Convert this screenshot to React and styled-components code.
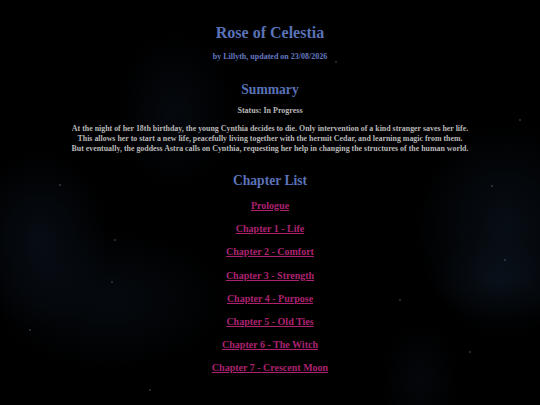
import styled, { createGlobalStyle } from "styled-components";

const GlobalStyle = createGlobalStyle`
  html, body {
    margin: 0;
    padding: 0;
    background: #000;
  }
  body {
    font-family: "Liberation Serif", "Times New Roman", serif;
  }
`;

const stars = [
  [60, 185], [115, 240], [492, 186], [336, 62], [112, 282], [470, 352],
  [30, 330], [400, 300], [150, 390], [520, 120], [505, 260],
];

const starLayer = stars
  .map(([x, y]) => `radial-gradient(circle at ${x}px ${y}px, rgba(200,215,255,0.4) 0, rgba(200,215,255,0) 1.3px)`)
  .join(",");

const Page = styled.div`
  min-height: 405px;
  box-sizing: border-box;
  padding: 23px 0 20px;
  text-align: center;
  background:
    ${starLayer},
    radial-gradient(ellipse 70px 90px at 40px 240px, rgba(20, 36, 58, 0.35), rgba(0,0,0,0)),
    radial-gradient(ellipse 120px 70px at 110px 300px, rgba(18, 32, 50, 0.3), rgba(0,0,0,0)),
    radial-gradient(ellipse 90px 110px at 505px 230px, rgba(22, 40, 62, 0.35), rgba(0,0,0,0)),
    radial-gradient(ellipse 60px 80px at 175px 110px, rgba(20, 34, 55, 0.25), rgba(0,0,0,0)),
    radial-gradient(ellipse 70px 40px at 500px 280px, rgba(18, 34, 52, 0.3), rgba(0,0,0,0)),
    radial-gradient(ellipse 40px 60px at 420px 380px, rgba(16, 26, 42, 0.25), rgba(0,0,0,0)),
    #000;
`;

const Title = styled.h1`
  margin: 0;
  font-size: 16px;
  line-height: 20px;
  font-weight: bold;
  color: #5a72b8;
`;

const Byline = styled.div`
  margin-top: 9px;
  font-size: 8px;
  line-height: 10px;
  font-weight: bold;
  color: #6478c0;
`;

const Heading = styled.h2`
  margin: ${(p) => p.$top}px 0 0;
  font-size: 13.6px;
  line-height: 17px;
  font-weight: bold;
  color: #5a72b8;
`;

const Status = styled.div`
  margin-top: 8px;
  font-size: 8px;
  line-height: 10px;
  font-weight: bold;
  color: #b8b8b8;
`;

const Synopsis = styled.p`
  margin: 8px 0 0;
  font-size: 7.9px;
  line-height: 10px;
  font-weight: bold;
  color: #b8b8b8;
`;

const ChapterList = styled.div`
  margin-top: 11px;
  display: flex;
  flex-direction: column;
  align-items: center;
  gap: 11.2px;
`;

const ChapterLink = styled.a`
  display: block;
  font-size: 10px;
  line-height: 12px;
  font-weight: bold;
  color: #ac2270;
  text-decoration: underline;
  cursor: pointer;
`;

const chapters = [
  "Prologue",
  "Chapter 1 - Life",
  "Chapter 2 - Comfort",
  "Chapter 3 - Strength",
  "Chapter 4 - Purpose",
  "Chapter 5 - Old Ties",
  "Chapter 6 - The Witch",
  "Chapter 7 - Crescent Moon",
];

export default function App() {
  return (
    <>
      <GlobalStyle />
      <Page>
        <Title>Rose of Celestia</Title>
        <Byline>by Lillyth, updated on 23/08/2026</Byline>
        <Heading $top={19}>Summary</Heading>
        <Status>Status: In Progress</Status>
        <Synopsis>
          At the night of her 18th birthday, the young Cynthia decides to die. Only intervention of a kind stranger saves her life.
          <br />
          This allows her to start a new life, peacefully living together with the hermit Cedar, and learning magic from them.
          <br />
          But eventually, the goddess Astra calls on Cynthia, requesting her help in changing the structures of the human world.
        </Synopsis>
        <Heading $top={18}>Chapter List</Heading>
        <ChapterList>
          {chapters.map((c) => (
            <ChapterLink key={c}>{c}</ChapterLink>
          ))}
        </ChapterList>
      </Page>
    </>
  );
}
